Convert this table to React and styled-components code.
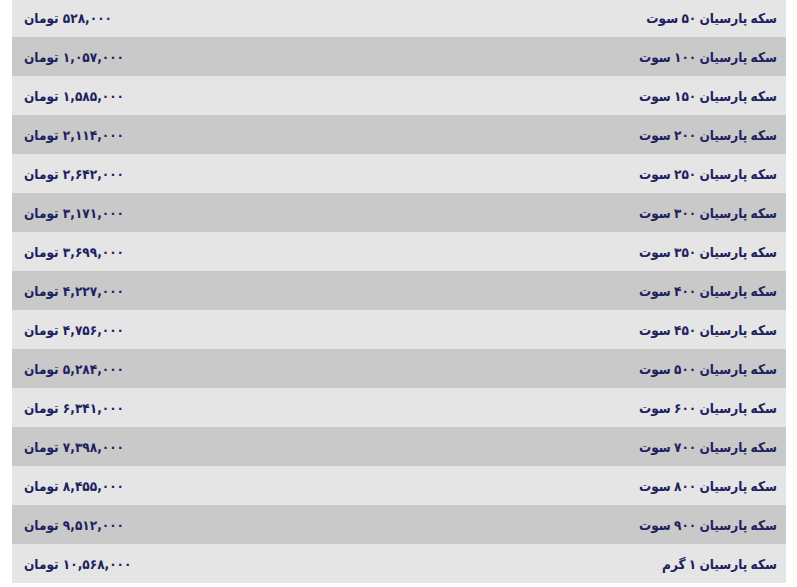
import React from "react";
import styled, { createGlobalStyle } from "styled-components";

const Global = createGlobalStyle`
  html, body { margin: 0; padding: 0; background: #ffffff; }
  body { font-family: "DejaVu Sans Condensed", "DejaVu Sans", sans-serif; }
`;

const Page = styled.div`
  width: 797px;
  height: 587px;
  overflow: hidden;
  background: #ffffff;
  padding: 0 11px 0 12px;
  box-sizing: border-box;
`;

const Table = styled.div`
  display: flex;
  flex-direction: column;
  margin-top: -2px;
  direction: rtl;
`;

const Row = styled.div`
  display: flex;
  align-items: center;
  justify-content: space-between;
  height: 39px;
  padding: 0 9px 0 12px;
  background: ${(p) => (p.$shade ? "#c9c9c9" : "#e4e5e4")};
  color: #1d2160;
  font-weight: bold;
  font-size: 13.5px;
`;

const Label = styled.span`
  white-space: nowrap;
  word-spacing: -1px;
`;

const Price = styled.span`
  white-space: nowrap;
`;

const Digits = styled.span`
  letter-spacing: -1.2px;
`;

const data = [
  ["۵۰", "سوت", "۵۲۸,۰۰۰"],
  ["۱۰۰", "سوت", "۱,۰۵۷,۰۰۰"],
  ["۱۵۰", "سوت", "۱,۵۸۵,۰۰۰"],
  ["۲۰۰", "سوت", "۲,۱۱۴,۰۰۰"],
  ["۲۵۰", "سوت", "۲,۶۴۲,۰۰۰"],
  ["۳۰۰", "سوت", "۳,۱۷۱,۰۰۰"],
  ["۳۵۰", "سوت", "۳,۶۹۹,۰۰۰"],
  ["۴۰۰", "سوت", "۴,۲۲۷,۰۰۰"],
  ["۴۵۰", "سوت", "۴,۷۵۶,۰۰۰"],
  ["۵۰۰", "سوت", "۵,۲۸۴,۰۰۰"],
  ["۶۰۰", "سوت", "۶,۳۴۱,۰۰۰"],
  ["۷۰۰", "سوت", "۷,۳۹۸,۰۰۰"],
  ["۸۰۰", "سوت", "۸,۴۵۵,۰۰۰"],
  ["۹۰۰", "سوت", "۹,۵۱۲,۰۰۰"],
  ["۱", "گرم", "۱۰,۵۶۸,۰۰۰"],
];

export default function App() {
  return (
    <>
      <Global />
      <Page>
        <Table>
          {data.map(([num, unit, price], i) => (
            <Row key={i} $shade={i % 2 === 1}>
              <Label>
                سکه پارسیان <Digits>{num}</Digits> {unit}
              </Label>
              <Price>
                <Digits>{price}</Digits> تومان
              </Price>
            </Row>
          ))}
        </Table>
      </Page>
    </>
  );
}
